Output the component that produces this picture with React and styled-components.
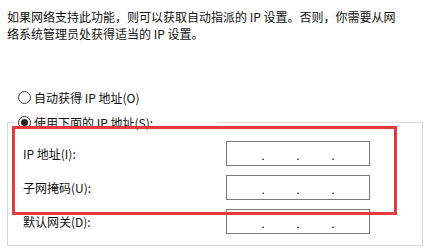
import React from "react";
import styled, { createGlobalStyle } from "styled-components";

const GlobalStyle = createGlobalStyle`
  html, body {
    margin: 0;
    padding: 0;
    background: #fff;
  }
  body {
    font-family: "Noto Sans CJK SC", "Noto Sans", sans-serif;
    font-size: 12px;
    color: #111;
  }
`;

const Page = styled.div`
  position: relative;
  width: 430px;
  height: 252px;
  padding: 8px 7px 0;
  box-sizing: border-box;
  overflow: hidden;
  background: #fff;
`;

const Intro = styled.p`
  margin: 0;
  line-height: 17px;
  white-space: nowrap;
`;

const RadioRow = styled.label`
  display: flex;
  align-items: center;
  gap: 3px;
  height: 17px;
  line-height: 17px;
  white-space: nowrap;
  margin: ${(p) => p.$top || 0}px 0 0 ${(p) => p.$left || 0}px;
`;

const RadioMark = styled.span`
  width: 13px;
  height: 13px;
  box-sizing: border-box;
  border: 1px solid #333;
  border-radius: 50%;
  display: flex;
  align-items: center;
  justify-content: center;
  flex: none;

  &::after {
    content: "";
    width: 7px;
    height: 7px;
    border-radius: 50%;
    background: ${(p) => (p.$checked ? "#222" : "transparent")};
  }
`;

const Group = styled.fieldset`
  margin: 8px 0 0;
  padding: 0 0 11px;
  border: 1px solid #dadada;
  min-width: 0;
`;

const Legend = styled.legend`
  margin-left: 9px;
  padding: 0 0 0 1px;
  width: 200px;
  box-sizing: border-box;
`;

const Fields = styled.div`
  display: grid;
  grid-template-columns: 203px 144px;
  row-gap: 9px;
  align-items: center;
  padding: 10px 0 0 15px;
`;

const FieldLabel = styled.span`
  line-height: 17px;
  white-space: nowrap;
`;

const IpBox = styled.div`
  height: 25px;
  box-sizing: border-box;
  border: 1px solid #7a7a7a;
  background: #fff;
  display: flex;
  align-items: center;
  justify-content: center;
  gap: 32px;
`;

const Dot = styled.span`
  font-size: 11px;
  line-height: 1;
  color: #000;
  transform: translateY(2px);
`;

const Highlight = styled.div`
  position: absolute;
  left: 12px;
  top: 126px;
  width: 385px;
  height: 89px;
  box-sizing: border-box;
  border: 3px solid #e5393d;
  pointer-events: none;
`;

const fields = ["IP 地址(I):", "子网掩码(U):", "默认网关(D):"];

const IpInput = () => (
  <IpBox>
    <Dot>.</Dot>
    <Dot>.</Dot>
    <Dot>.</Dot>
  </IpBox>
);

const App = () => {
  return (
    <Page>
      <GlobalStyle />
      <Intro>
        如果网络支持此功能，则可以获取自动指派的 IP 设置。否则，你需要从网
        <br />
        络系统管理员处获得适当的 IP 设置。
      </Intro>

      <RadioRow $top={47} $left={11}>
        <RadioMark />
        自动获得 IP 地址(O)
      </RadioRow>

      <Group>
        <Legend>
          <RadioRow>
            <RadioMark $checked />
            使用下面的 IP 地址(S):
          </RadioRow>
        </Legend>
        <Fields>
          {fields.map((f) => (
            <React.Fragment key={f}>
              <FieldLabel>{f}</FieldLabel>
              <IpInput />
            </React.Fragment>
          ))}
        </Fields>
      </Group>

      <Highlight />
    </Page>
  );
};

export default App;
